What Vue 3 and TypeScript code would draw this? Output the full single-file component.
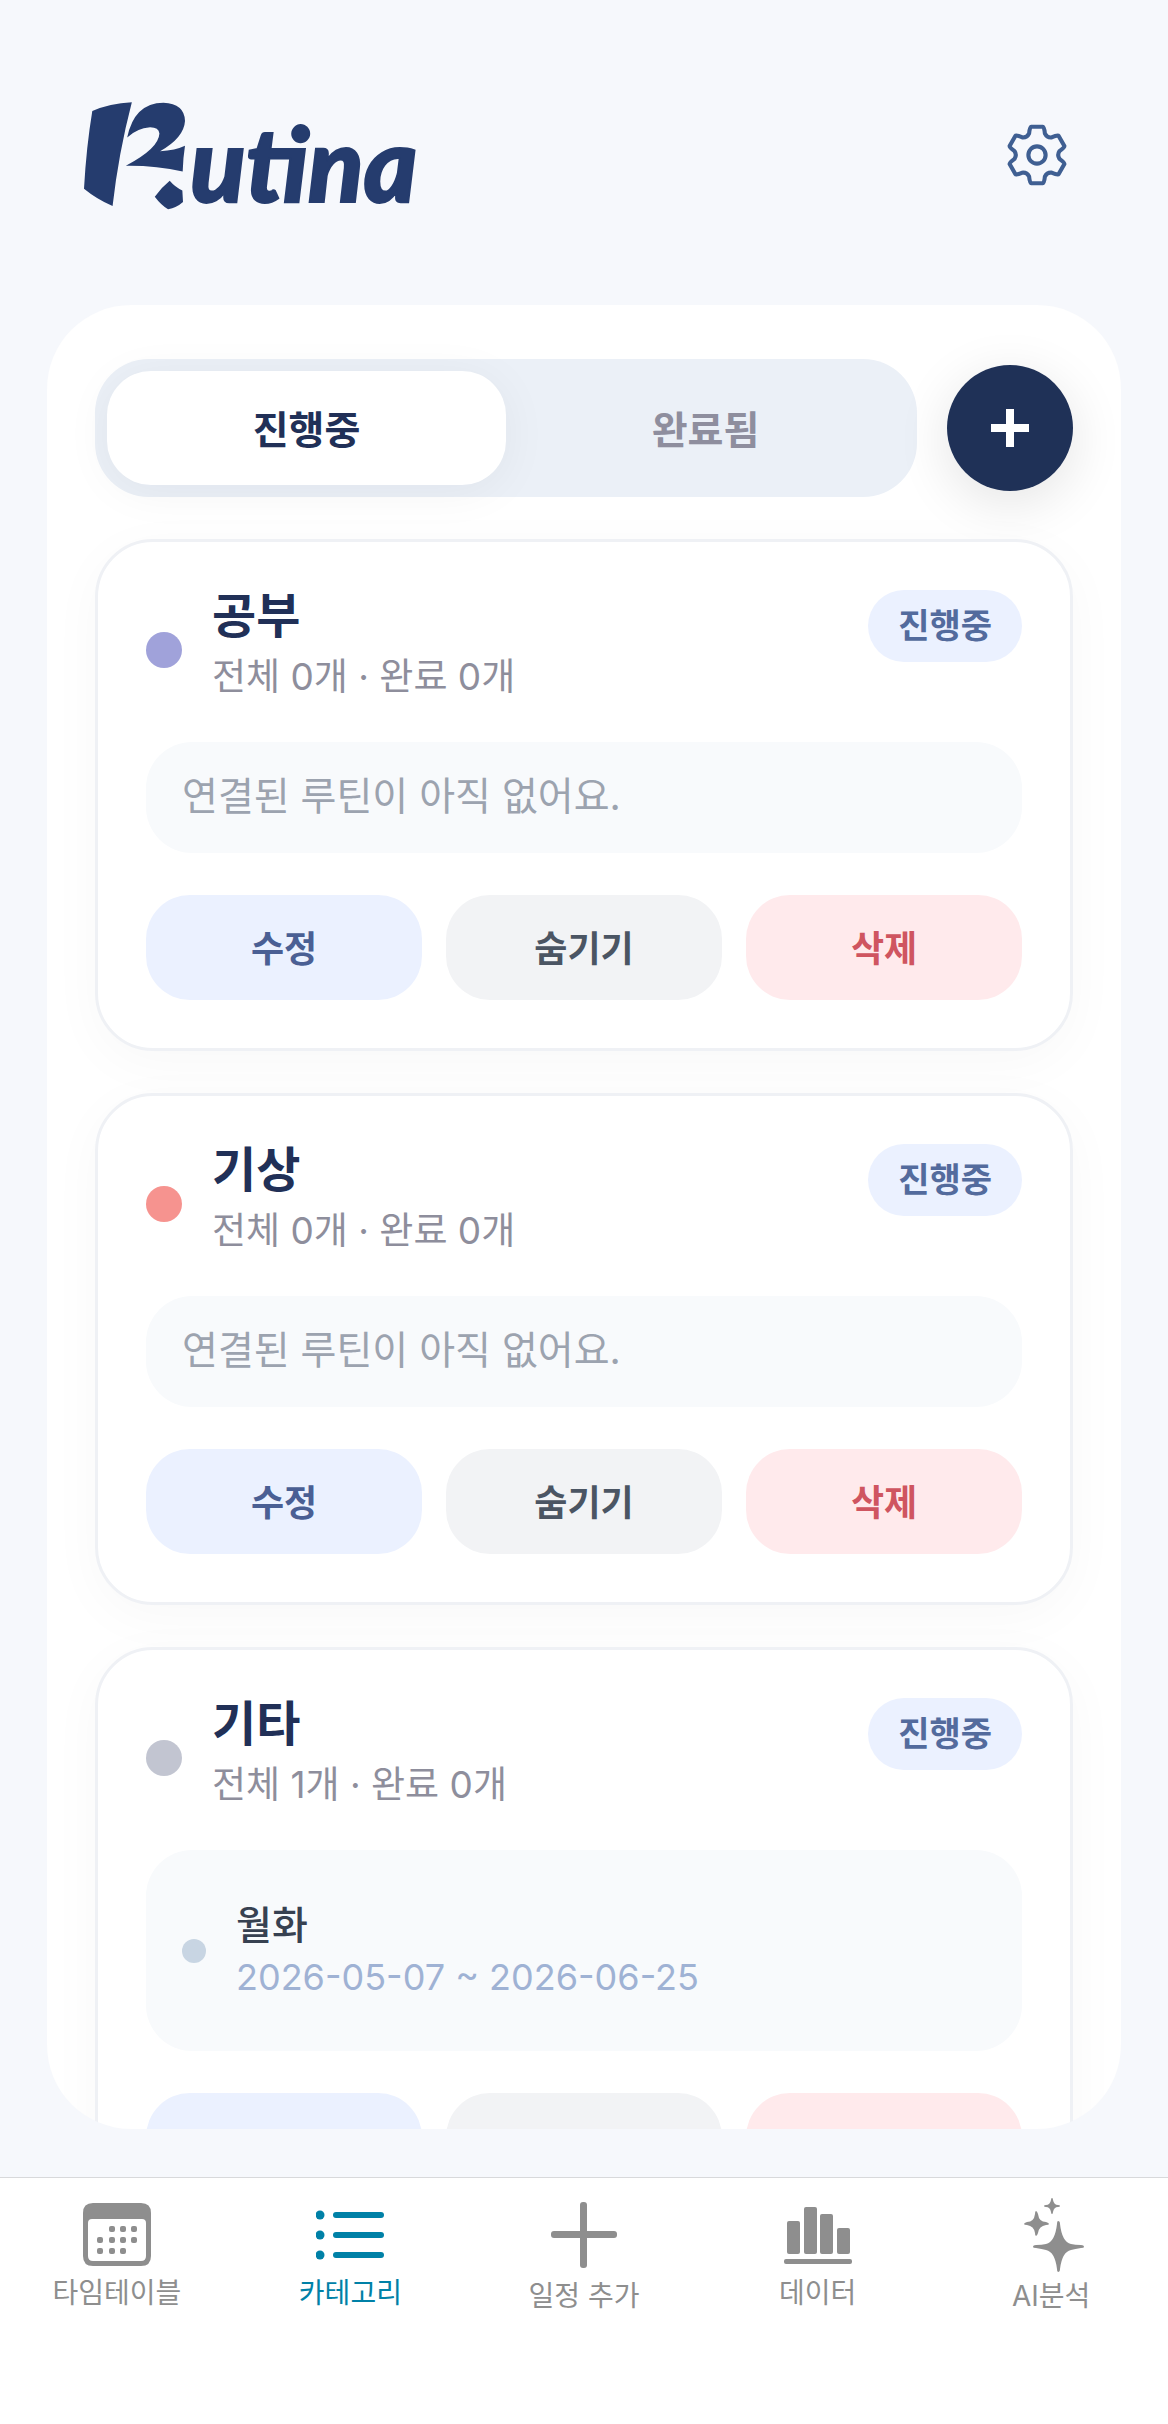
<script setup lang="ts">
import { ref } from 'vue'

interface Routine {
  name: string
  period: string
}

interface Category {
  name: string
  color: string
  total: number
  done: number
  routines: Routine[]
}

const tabs = ['진행중', '완료됨']
const activeTab = ref('진행중')

const categories: Category[] = [
  { name: '공부', color: '#a0a2da', total: 0, done: 0, routines: [] },
  { name: '기상', color: '#f6938f', total: 0, done: 0, routines: [] },
  {
    name: '기타',
    color: '#c2c5d1',
    total: 1,
    done: 0,
    routines: [{ name: '월화', period: '2026-05-07 ~ 2026-06-25' }],
  },
]

/** Outline of a six-toothed gear centred on the origin. */
function gearPath(): string {
  const points: string[] = []
  for (let i = 0; i < 6; i++) {
    const a = (i * Math.PI) / 3
    const at = (x: number, y: number) =>
      `${(x * Math.cos(a) - y * Math.sin(a)).toFixed(1)} ${(x * Math.sin(a) + y * Math.cos(a)).toFixed(1)}`
    points.push(
      `${i === 0 ? 'M' : 'L'}${at(-23, -62)}`,
      `Q${at(-21, -82)} ${at(-17, -82)}`,
      `L${at(17, -82)}`,
      `Q${at(21, -82)} ${at(23, -62)}`,
      `Q${at(29, -50)} ${at(42, -51)}`,
    )
  }
  return points.join(' ') + 'Z'
}
const gear = gearPath()

const calendarDots = [
  [26, 23], [37, 23], [48, 23],
  [14, 34], [26, 34], [37, 34], [48, 34],
  [14, 45], [26, 45], [37, 45],
]
</script>

<template>
  <div class="page">
    <header class="top">
      <h1 class="logo">
        <svg class="mark" viewBox="70 60 310 332" aria-hidden="true">
          <path d="M98 92 Q150 70 217 66 Q177 220 159 378 Q112 358 73 326 Q80 200 98 92Z" />
          <path d="M203 172 Q224 68 312 67 Q376 70 377 122 Q374 172 302 213 Q348 211 377 197 Q371 235 370 274 Q290 256 199 257 Q298 205 300 160 Q298 141 272 141 Q232 144 203 172Z" />
          <path d="M331 302 Q348 322 369 331 L371 366 Q352 383 326 388 Q304 374 286 350 Q304 324 331 302Z" />
        </svg>
        <span class="word">utina</span>
      </h1>
      <button class="settings" type="button" aria-label="설정">
        <svg viewBox="-90 -90 180 180" aria-hidden="true">
          <path :d="gear" />
          <circle r="25" />
        </svg>
      </button>
    </header>

    <main class="panel">
      <div class="toolbar">
        <div class="segment" role="tablist">
          <button
            v-for="tab in tabs"
            :key="tab"
            type="button"
            role="tab"
            class="tab"
            :class="{ active: tab === activeTab }"
            :aria-selected="tab === activeTab"
            @click="activeTab = tab"
          >{{ tab }}</button>
        </div>
        <button class="add" type="button" aria-label="카테고리 추가">
          <svg viewBox="0 0 38 38" aria-hidden="true"><path d="M19 0V38M0 19H38" /></svg>
        </button>
      </div>

      <article v-for="category in categories" :key="category.name" class="card">
        <div class="card-head">
          <span class="dot" :style="{ background: category.color }"></span>
          <div class="titles">
            <h2>{{ category.name }}</h2>
            <p>전체 {{ category.total }}개 · 완료 {{ category.done }}개</p>
          </div>
          <span class="badge">진행중</span>
        </div>

        <p v-if="category.routines.length === 0" class="empty">연결된 루틴이 아직 없어요.</p>
        <ul v-else class="routines">
          <li v-for="routine in category.routines" :key="routine.name">
            <span class="bullet"></span>
            <div>
              <p class="routine-name">{{ routine.name }}</p>
              <p class="period">{{ routine.period }}</p>
            </div>
          </li>
        </ul>

        <div class="actions">
          <button type="button" class="edit">수정</button>
          <button type="button" class="hide">숨기기</button>
          <button type="button" class="remove">삭제</button>
        </div>
      </article>
    </main>

    <nav class="bottom">
      <a href="#timetable">
        <svg width="68" height="64" viewBox="0 0 68 64" aria-hidden="true">
          <path fill-rule="evenodd" d="M10 0H58Q68 0 68 10V53Q68 63 58 63H10Q0 63 0 53V10Q0 0 10 0ZM9 16Q5 16 5 20V53Q5 58 10 58H58Q63 58 63 53V20Q63 16 59 16Z" />
          <rect v-for="[x, y] in calendarDots" :key="`${x}-${y}`" :x="x" :y="y" width="6" height="6" rx="2" />
        </svg>
        <span>타임테이블</span>
      </a>
      <a href="#category" class="current" aria-current="page">
        <svg width="68" height="64" viewBox="0 0 68 64" aria-hidden="true">
          <g v-for="y in [12, 32, 52]" :key="y">
            <circle cx="4" :cy="y" r="4.5" />
            <rect x="17" :y="y - 3" width="51" height="6" rx="3" />
          </g>
        </svg>
        <span>카테고리</span>
      </a>
      <a href="#add" class="tall">
        <svg width="66" height="74" viewBox="0 0 66 74" aria-hidden="true">
          <rect x="29" y="4" width="7" height="66" rx="3" />
          <rect x="0" y="33" width="66" height="7" rx="3" />
        </svg>
        <span>일정 추가</span>
      </a>
      <a href="#data">
        <svg width="68" height="64" viewBox="0 0 68 64" aria-hidden="true">
          <rect x="3" y="18" width="13" height="33" rx="2" />
          <rect x="20" y="4" width="13" height="47" rx="2" />
          <rect x="36" y="11" width="13" height="40" rx="2" />
          <rect x="53" y="25" width="13" height="26" rx="2" />
          <rect x="0" y="56" width="68" height="5" rx="2" />
        </svg>
        <span>데이터</span>
      </a>
      <a href="#ai" class="tall">
        <svg width="66" height="74" viewBox="-6 0 66 74" aria-hidden="true">
          <path d="M28 0Q29 0 29 2Q30 7 34 7Q36 7 36 8Q36 9 34 9Q30 9 29 14Q29 16 28 16Q27 16 27 14Q26 9 22 9Q20 9 20 8Q20 7 22 7Q26 7 27 2Q27 0 28 0Z" />
          <path d="M12 13Q13 13 14 16Q15 24 22 24Q25 25 25 26Q25 27 22 27Q15 28 14 35Q13 38 12 38Q11 38 11 35Q10 28 3 27Q0 27 0 26Q0 25 3 24Q10 24 11 16Q11 13 12 13Z" />
          <path d="M34 23Q36 23 36 26Q38 44 47 46Q51 47 57 47Q60 47 60 49Q60 50 57 50Q51 51 47 52Q38 54 36 71Q36 74 34 74Q33 74 33 71Q31 54 22 52Q18 51 12 50Q9 50 9 49Q9 47 12 47Q18 47 22 46Q31 44 33 26Q33 23 34 23Z" />
        </svg>
        <span>AI분석</span>
      </a>
    </nav>
  </div>
</template>

<style>
body {
  margin: 0;
  background: #f6f8fc;
}
</style>

<style scoped>
.page {
  height: 100vh;
  display: flex;
  flex-direction: column;
  font-family: Inter, 'Noto Sans CJK KR', sans-serif;
  color: #213057;
}

h1,
h2,
p,
ul {
  margin: 0;
  padding: 0;
}

button {
  border: 0;
  padding: 0;
  font-family: inherit;
  cursor: pointer;
}

.top {
  flex: none;
  display: flex;
  justify-content: space-between;
  align-items: center;
  padding: 95px 96px 90px 83px;
}

.logo {
  display: flex;
  align-items: center;
  height: 120px;
  color: #253c6e;
}

.mark {
  width: 103px;
  height: 111px;
  fill: currentColor;
}

.word {
  margin-left: 4px;
  padding-top: 16px;
  font-family: Lato, sans-serif;
  font-size: 102px;
  line-height: 102px;
  font-weight: 900;
  font-style: italic;
  -webkit-text-stroke: 2px currentColor;
}

.settings {
  display: flex;
  margin-right: 4px;
  background: none;
}

.settings svg {
  width: 62px;
  height: 62px;
  fill: none;
  stroke: #3f5f92;
  stroke-width: 12;
  stroke-linejoin: round;
}

.panel {
  flex: 1;
  min-height: 0;
  margin: 0 47px 48px;
  padding: 54px 48px 0;
  box-sizing: border-box;
  display: flex;
  flex-direction: column;
  gap: 42px;
  overflow-y: auto;
  scrollbar-width: none;
  border-radius: 84px;
  background: #fff;
}

.toolbar {
  flex: none;
  display: flex;
  align-items: center;
  gap: 30px;
}

.segment {
  flex: 1;
  display: flex;
  padding: 12px;
  border-radius: 54px;
  background: #ebf0f7;
}

.tab {
  flex: 1;
  height: 114px;
  padding-bottom: 3px;
  border-radius: 44px;
  background: transparent;
  color: #8e8e9e;
  font-size: 39px;
  font-weight: 700;
}

.tab.active {
  background: #fff;
  color: #213057;
  box-shadow: 0 6px 48px rgba(20, 20, 40, 0.05);
}

.add {
  width: 126px;
  height: 126px;
  display: flex;
  align-items: center;
  justify-content: center;
  border-radius: 50%;
  background: #1f3157;
  box-shadow: 0 12px 54px rgba(0, 0, 0, 0.11);
}

.add svg {
  width: 38px;
  height: 38px;
  stroke: #fff;
  stroke-width: 8;
}

.card {
  flex: none;
  padding: 48px;
  border: 3px solid #eff1f5;
  border-radius: 58px;
  background: #fff;
  box-shadow: 0 12px 54px rgba(0, 0, 0, 0.03);
}

.card-head {
  display: flex;
  align-items: center;
  height: 120px;
  margin-bottom: 32px;
}

.dot {
  flex: none;
  width: 36px;
  height: 36px;
  border-radius: 50%;
}

.titles {
  flex: 1;
  margin: 0 30px;
  padding-bottom: 8px;
}

.titles h2 {
  font-size: 48px;
  line-height: 62px;
  font-weight: 700;
}

.titles p {
  font-size: 37px;
  line-height: 60px;
  color: #8e8e9c;
}

.badge {
  align-self: flex-start;
  padding: 0 30px;
  border-radius: 36px;
  background: #ebf1ff;
  color: #536b9d;
  font-size: 34px;
  line-height: 72px;
  font-weight: 700;
}

.empty,
.routines {
  margin-bottom: 42px;
  border-radius: 46px;
  background: #f8fafc;
}

.empty {
  padding: 0 36px 3px;
  font-size: 39px;
  line-height: 108px;
  color: #9ca3af;
}

.routines {
  padding: 48px 36px;
  list-style: none;
}

.routines li {
  display: flex;
  align-items: center;
  gap: 30px;
}

.bullet {
  width: 24px;
  height: 24px;
  border-radius: 50%;
  background: #c8d5e3;
}

.routine-name {
  font-size: 39px;
  line-height: 54px;
  font-weight: 500;
  color: #374151;
}

.period {
  font-size: 36px;
  line-height: 51px;
  color: #9fb2d4;
}

.actions {
  display: flex;
  gap: 24px;
}

.actions button {
  flex: 1;
  height: 105px;
  padding-bottom: 3px;
  border-radius: 44px;
  font-size: 36px;
  font-weight: 700;
}

.edit {
  background: #ebf1ff;
  color: #4a5f94;
}

.hide {
  background: #f2f3f5;
  color: #4b5563;
}

.remove {
  background: #ffeaec;
  color: #cf5560;
}

.bottom {
  flex: none;
  display: flex;
  height: 246px;
  border-top: 1px solid #d8d9db;
  background: #fff;
}

.bottom a {
  flex: 1;
  box-sizing: border-box;
  display: flex;
  flex-direction: column;
  align-items: center;
  height: 135px;
  padding-top: 25px;
  color: #8e8e8e;
  font-size: 28px;
  line-height: 40px;
  text-decoration: none;
}

.bottom a span {
  margin-top: auto;
}

.bottom .tall {
  height: 138px;
  padding-top: 20px;
}

.bottom .current {
  color: #0081a7;
}

.bottom svg {
  flex: none;
  fill: currentColor;
}
</style>
